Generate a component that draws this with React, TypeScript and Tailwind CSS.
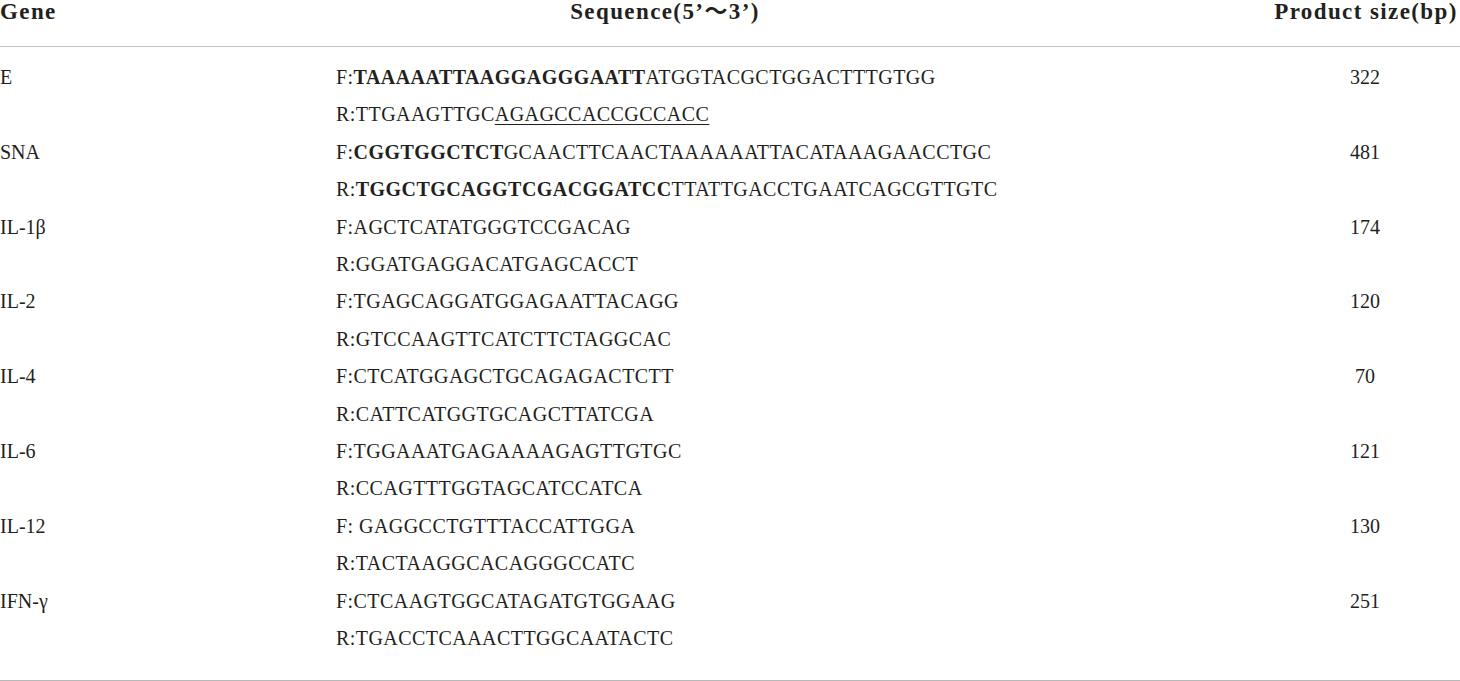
import React from 'react';

type Row = {
  gene: string;
  fwd: React.ReactNode;
  rev: React.ReactNode;
  size: string;
};

const ROWS: Row[] = [
  {
    gene: 'E',
    fwd: (
      <>
        F:<b>TAAAAATTAAGGAGGGAATT</b>ATGGTACGCTGGACTTTGTGG
      </>
    ),
    rev: (
      <>
        R:TTGAAGTTGC<span className="underline decoration-1 underline-offset-[3px]">AGAGCCACCGCCACC</span>
      </>
    ),
    size: '322',
  },
  {
    gene: 'SNA',
    fwd: (
      <>
        F:<b>CGGTGGCTCT</b>GCAACTTCAACTAAAAAATTACATAAAGAACCTGC
      </>
    ),
    rev: (
      <>
        R:<b>TGGCTGCAGGTCGACGGATCC</b>TTATTGACCTGAATCAGCGTTGTC
      </>
    ),
    size: '481',
  },
  { gene: 'IL-1β', fwd: 'F:AGCTCATATGGGTCCGACAG', rev: 'R:GGATGAGGACATGAGCACCT', size: '174' },
  { gene: 'IL-2', fwd: 'F:TGAGCAGGATGGAGAATTACAGG', rev: 'R:GTCCAAGTTCATCTTCTAGGCAC', size: '120' },
  { gene: 'IL-4', fwd: 'F:CTCATGGAGCTGCAGAGACTCTT', rev: 'R:CATTCATGGTGCAGCTTATCGA', size: '70' },
  { gene: 'IL-6', fwd: 'F:TGGAAATGAGAAAAGAGTTGTGC', rev: 'R:CCAGTTTGGTAGCATCCATCA', size: '121' },
  { gene: 'IL-12', fwd: 'F: GAGGCCTGTTTACCATTGGA', rev: 'R:TACTAAGGCACAGGGCCATC', size: '130' },
  { gene: 'IFN-γ', fwd: 'F:CTCAAGTGGCATAGATGTGGAAG', rev: 'R:TGACCTCAAACTTGGCAATACTC', size: '251' },
];

const App: React.FC = () => {
  return (
    <div className="w-[1460px] bg-white text-[#231f20] font-['Liberation_Serif','Times_New_Roman','Noto_Sans_CJK_SC',serif]">
      {/* header row */}
      <div className="grid grid-cols-[336px_656px_1fr_190px] h-[47px] border-b border-[#c4c4c4] text-[23px] leading-[24px] font-bold tracking-[1.4px]">
        <div>Gene</div>
        <div className="text-center pl-[2px]">Sequence(5’～3’)</div>
        <div />
        <div className="text-center pl-[2px]">Product size(bp)</div>
      </div>

      {/* body */}
      <div className="pt-[12px] pb-[22px] border-b border-[#b8b8b8] text-[20px] leading-[37.4px]">
        {ROWS.map((r) => (
          <div key={r.gene} className="grid grid-cols-[336px_656px_1fr_190px]">
            <div>{r.gene}</div>
            <div className="whitespace-nowrap tracking-[0.45px]">
              <div>{r.fwd}</div>
              <div>{r.rev}</div>
            </div>
            <div />
            <div className="text-center">{r.size}</div>
          </div>
        ))}
      </div>
    </div>
  );
};

export default App;
